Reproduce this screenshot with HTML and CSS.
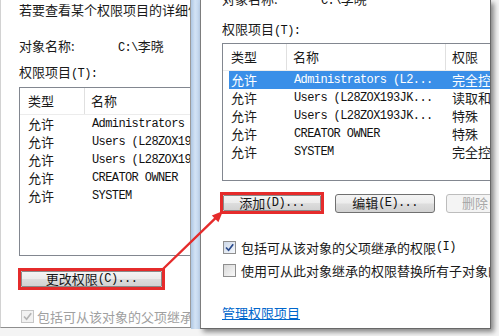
FILE: index.html
```html
<!DOCTYPE html>
<html lang="zh-CN">
<head>
<meta charset="utf-8">
<title>权限</title>
<link rel="stylesheet" href="styles.css">
</head>
<body>
<div class="stage">
  <div class="win win-back">
    <div class="line intro">若要查看某个权限项目的详细信息，请选择项目并单击“编辑”。</div>
    <div class="line obj"><span class="k">对象名称:</span><span class="v"><span class="lat">C:\</span>李晓</span></div>
    <div class="line lbl">权限项目<span class="lat">(T):</span></div>
    <div class="list list-back">
      <div class="hdr"><div class="c c1">类型</div><div class="c c2">名称</div></div>
      <div class="row"><div class="c c1">允许</div><div class="c c2 mono">Administrators (L28ZOX193JK...</div></div>
      <div class="row"><div class="c c1">允许</div><div class="c c2 mono">Users (L28ZOX193JK...</div></div>
      <div class="row"><div class="c c1">允许</div><div class="c c2 mono">Users (L28ZOX193JK...</div></div>
      <div class="row"><div class="c c1">允许</div><div class="c c2 mono">CREATOR OWNER</div></div>
      <div class="row"><div class="c c1">允许</div><div class="c c2 mono">SYSTEM</div></div>
    </div>
    <div class="hl hl-back"><div class="btn">更改权限<span class="lat">(C)...</span></div></div>
    <div class="chk chk-dis"><span class="box box-dis"><svg viewBox="0 0 11 11" width="11" height="11"><path d="M2 5.5 L4.6 8.3 L9.2 2.2" fill="none" stroke="#b4b4b4" stroke-width="1.7"/></svg></span>包括可从该对象的父项继承的权限</div>
  </div>
  <div class="frame"></div>
  <div class="win win-front">
    <div class="line obj obj-front"><span class="k">对象名称:</span><span class="v"><span class="lat">C:\</span>李晓</span></div>
    <div class="line lbl lbl-front">权限项目<span class="lat">(T):</span></div>
    <div class="list list-front">
      <div class="hdr"><div class="c c1">类型</div><div class="c c2">名称</div><div class="c c3">权限</div></div>
      <div class="row sel"><div class="c c1">允许</div><div class="c c2 mono">Administrators (L2...</div><div class="c c3">完全控制</div></div>
      <div class="row"><div class="c c1">允许</div><div class="c c2 mono">Users (L28ZOX193JK...</div><div class="c c3">读取和执行</div></div>
      <div class="row"><div class="c c1">允许</div><div class="c c2 mono">Users (L28ZOX193JK...</div><div class="c c3">特殊</div></div>
      <div class="row"><div class="c c1">允许</div><div class="c c2 mono">CREATOR OWNER</div><div class="c c3">特殊</div></div>
      <div class="row"><div class="c c1">允许</div><div class="c c2 mono">SYSTEM</div><div class="c c3">完全控制</div></div>
    </div>
    <div class="btns">
      <div class="hl hl-front"><div class="btn">添加<span class="lat">(D)...</span></div></div>
      <div class="btn btn-edit">编辑<span class="lat">(E)...</span></div>
      <div class="btn btn-del">删除<span class="lat">(R)</span></div>
    </div>
    <div class="chk chk-1"><span class="box box-on"><svg viewBox="0 0 11 11" width="11" height="11"><path d="M2 5.5 L4.6 8.3 L9.2 2.2" fill="none" stroke="#2a4a8c" stroke-width="1.7"/></svg></span>包括可从该对象的父项继承的权限<span class="lat">(I)</span></div>
    <div class="chk chk-2"><span class="box"></span>使用可从此对象继承的权限替换所有子对象的权限</div>
    <div class="line link">管理权限项目</div>
  </div>
</div>
<svg class="arrow" width="499" height="336" viewBox="0 0 499 336">
  <line x1="163" y1="269" x2="215.5" y2="218.2" stroke="#e52b2b" stroke-width="2.4" stroke-linecap="round"/>
  <polygon points="223,211 218.4,222.2 211.8,215.4" fill="#e52b2b"/>
</svg>
</body>
</html>
```

FILE: styles.css
```css
* { box-sizing: border-box; margin: 0; padding: 0; }
html, body { width: 499px; height: 336px; overflow: hidden; }
body {
  background: #f4f4f4;
  font-family: "Noto Sans CJK SC", "Microsoft YaHei", sans-serif;
  font-size: 13px;
  color: #1a1a1a;
  position: relative;
}
.stage { display: flex; align-items: flex-start; height: 336px; }

.win { background: #fff; overflow: hidden; white-space: nowrap; flex-shrink: 0; }
.win-back {
  width: 191px; height: 328px;
  border-left: 1px solid #d2d2d2;
  border-right: 1px solid #9b9b9b;
  border-bottom: 1px solid #8e8e8e;
  padding: 1px 0 0 18px;
}
.frame {
  width: 9px; height: 329px; flex-shrink: 0;
  background: linear-gradient(90deg, #aec7e4, #d2e2f4 45%, #bfd4ed);
}
.win-front {
  width: 291px; height: 329px;
  border-left: 1px solid #7d7d7d;
  border-right: 1px solid #686868;
  border-bottom: 1px solid #686868;
  padding-left: 21px;
  box-shadow: 3px 3px 5px rgba(0,0,0,0.45);
}

.line { height: 18px; line-height: 18px; }
.lat, .mono { font-family: "Liberation Mono", monospace; font-size: 12px; letter-spacing: -0.6px; color: #111; }
.sel .mono { color: #fff; }

.obj { margin-top: 18px; }
.obj-front { margin-top: -10px; }
.obj .k { display: inline-block; width: 99px; }
.lbl { margin-top: 8px; }
.lbl-front { margin-top: 12px; }

.list { border: 1px solid #828790; background: #fff; overflow: hidden; }
.list-back { width: 260px; height: 169px; margin-top: 6px; }
.list-front { width: 300px; height: 138px; margin-top: 5px; }
.hdr { display: grid; height: 27px; line-height: 26px; border-bottom: 1px solid #ececec; }
.hdr .c { padding-left: 6px; border-right: 1px solid #e0e0e0; }
.hdr .c1 { padding-left: 8px; }
.list-back .hdr { grid-template-columns: 65px 1fr; }
.list-back .hdr .c2 { border-right: none; }
.list-front .hdr { grid-template-columns: 64px 159px 1fr; }
.list-front .hdr .c3 { border-right: none; }
.row { display: grid; height: 18px; line-height: 18px; margin-left: 6px; }
.list-back .row { grid-template-columns: 59px 1fr; }
.list-front .row { grid-template-columns: 58px 159px 1fr; }
.row .c1 { padding-left: 2px; }
.row .c2 { padding-left: 7px; }
.row .c3 { padding-left: 6px; }
.sel { background: #3a8fe8; color: #fff; }

.btn {
  height: 19px; flex-shrink: 0;
  border: 1px solid #707070;
  border-radius: 3px;
  background: linear-gradient(#f4f4f4, #ececec 48%, #dddddd 52%, #d2d2d2);
  display: flex; align-items: center; justify-content: center;
  line-height: 16px;
}
.hl { display: inline-flex; flex-shrink: 0; border: 3px solid #e52b2b; }
.hl .btn { height: 16px; border-color: #8a8a8a; border-radius: 1px; }
.hl-back { margin: 12px 0 0 -1px; }
.hl-back .btn { width: 141px; }
.btns { display: flex; align-items: center; gap: 11px; margin: 11px 0 0 -2px; }
.hl-front .btn { width: 98px; }
.btn-edit { width: 100px; }
.btn-del { width: 100px; color: #a8a8a8; border-color: #bdbdbd; background: #f4f4f4; justify-content: flex-start; padding-left: 15px; }
.btn-del .lat { color: #a8a8a8; }

.chk { display: flex; align-items: center; height: 18px; }
.box {
  width: 13px; height: 13px; flex-shrink: 0;
  border: 1px solid #8f8f8f;
  background: linear-gradient(135deg, #d9d9d9, #f9f9f9);
  margin-right: 5px;
  display: flex; align-items: center; justify-content: center;
}
.box-on { background: linear-gradient(135deg, #cdd8e8, #f5f8fc); }
.chk-dis { margin: 17px 0 0 2px; color: #a0a0a0; }
.chk-dis .box { margin-right: 3px; }
.box-dis { border-color: #c6c6c6; background: #f2f2f2; }
.chk-1 { margin: 24px 0 0 1px; }
.chk-2 { margin: 5px 0 0 1px; }
.link { margin-top: 25px; color: #0066cc; text-decoration: underline; }

.arrow { position: absolute; left: 0; top: 0; pointer-events: none; }
```
